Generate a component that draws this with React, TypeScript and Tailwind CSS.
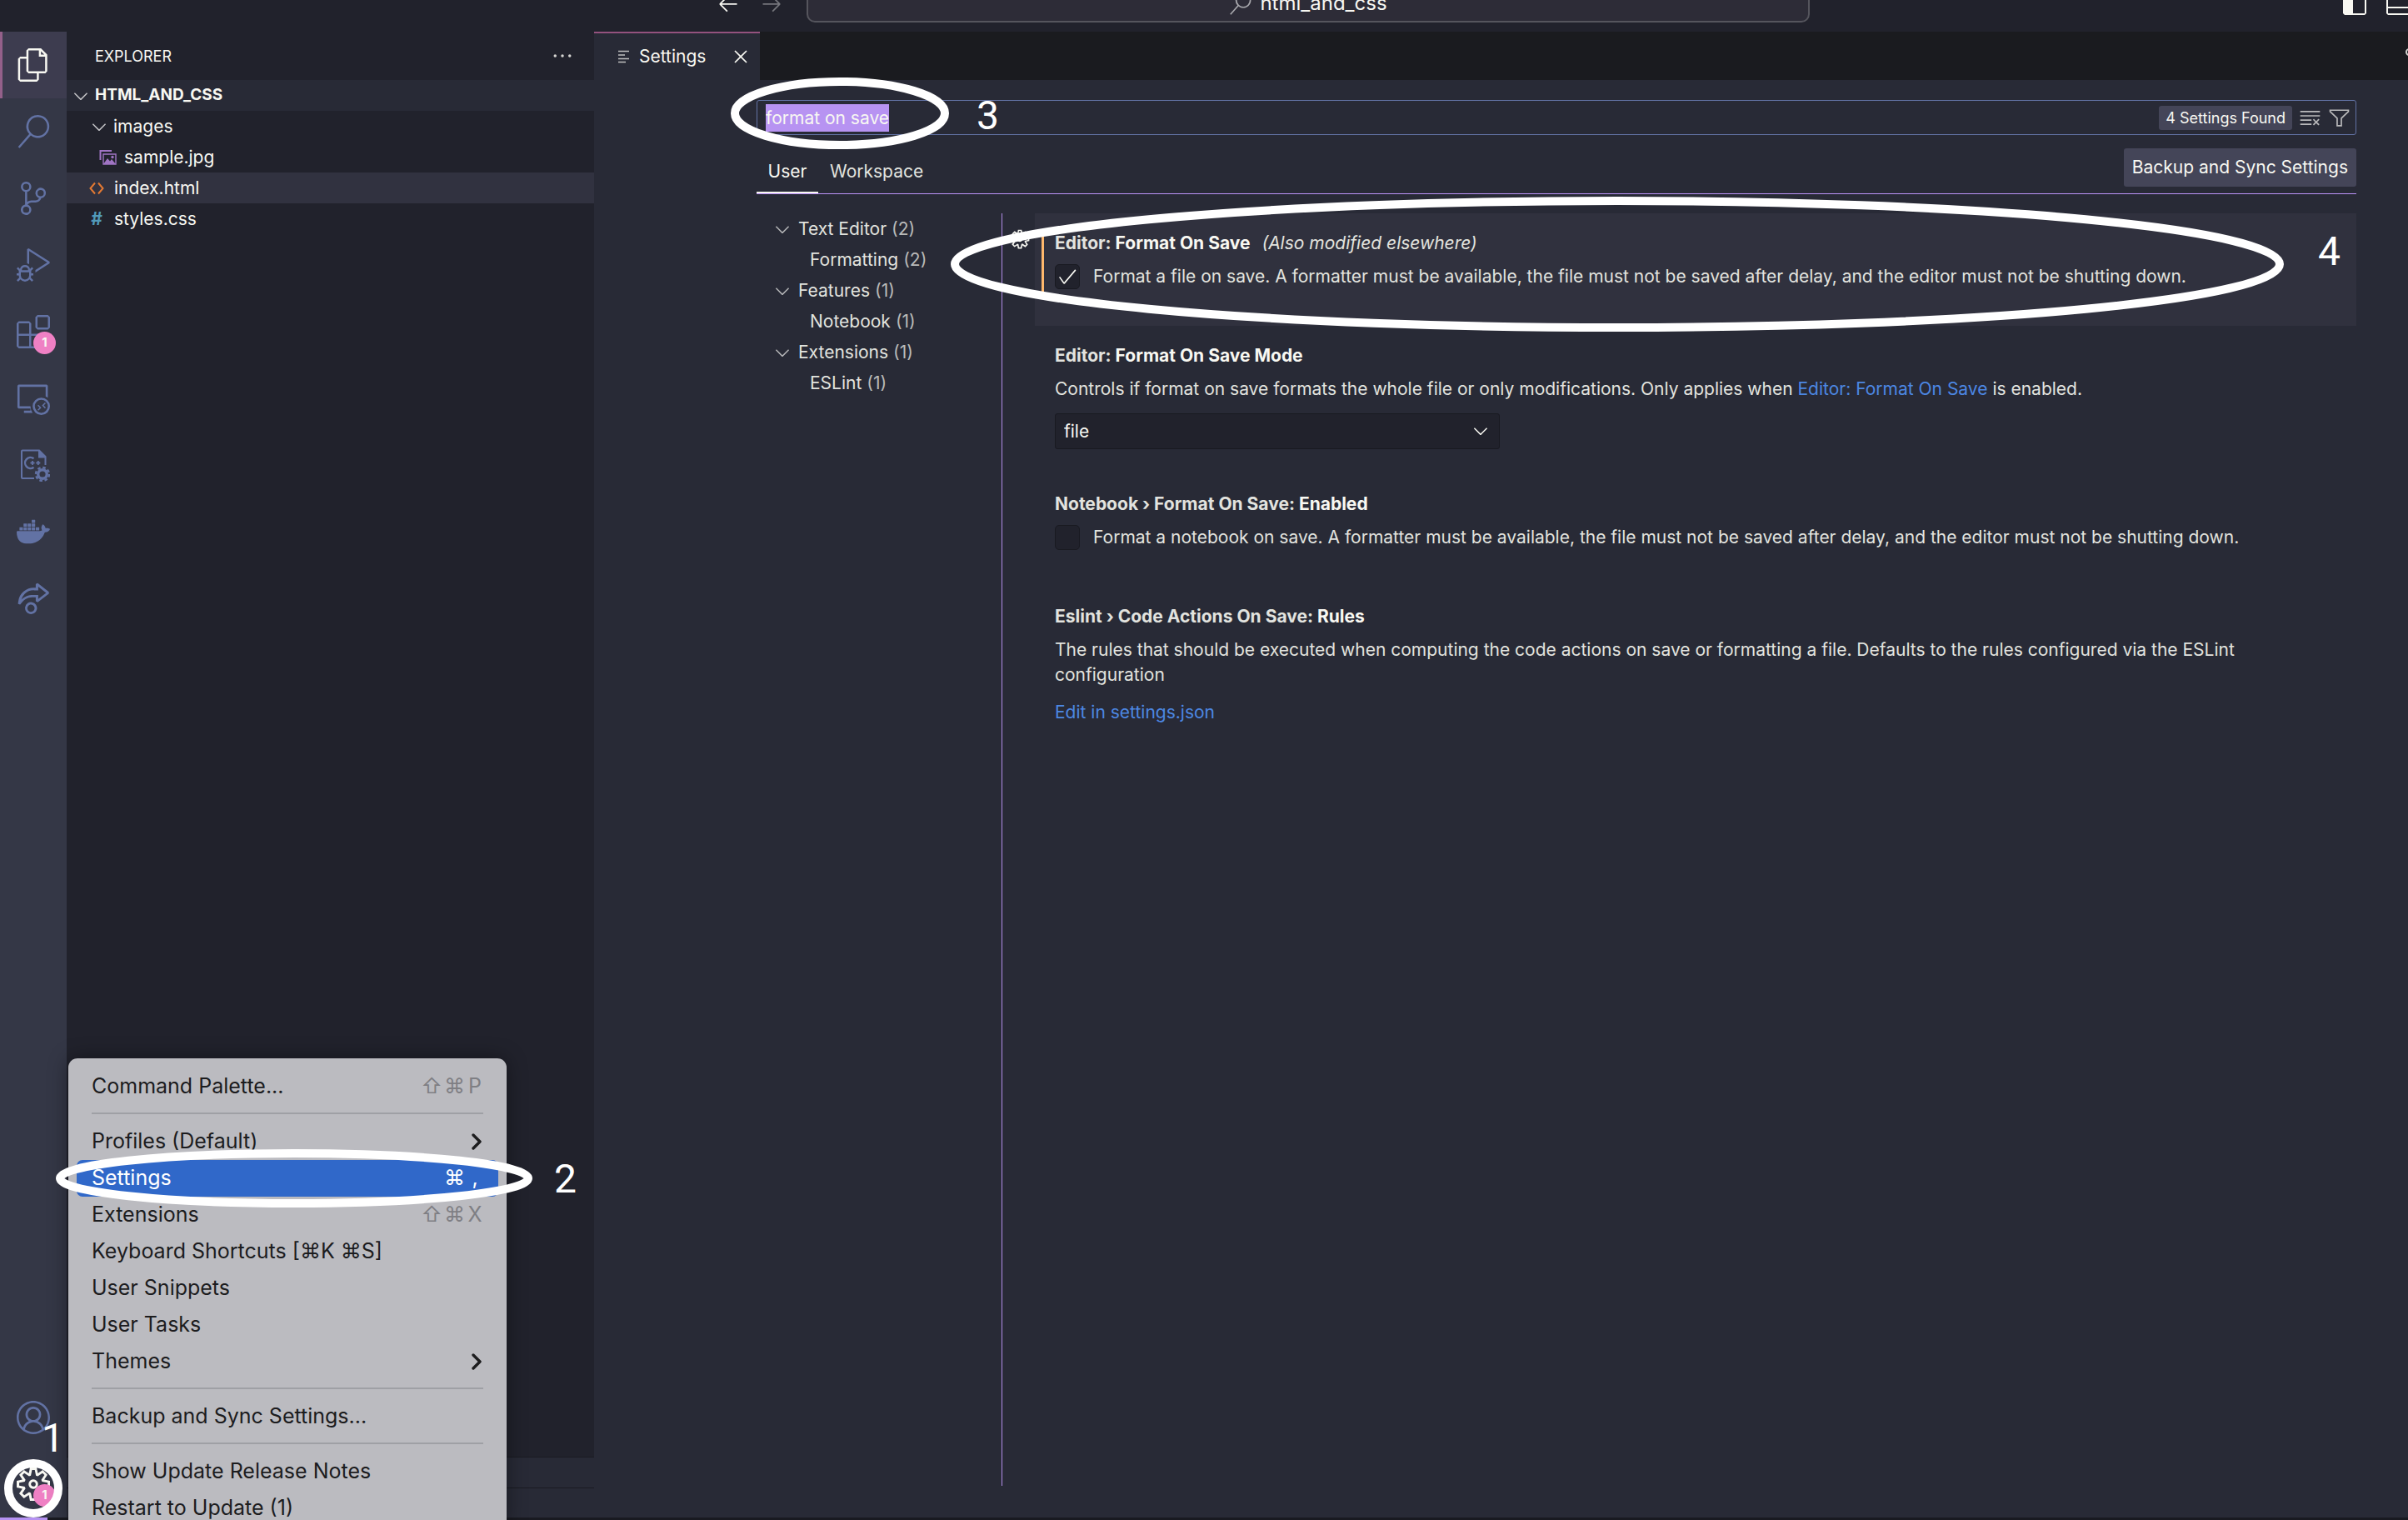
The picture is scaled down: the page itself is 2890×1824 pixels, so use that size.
import {ReactNode} from 'react';
import clsx from 'clsx';
import {
  VscAccount,
  VscArrowLeft,
  VscArrowRight,
  VscCheck,
  VscChevronDown,
  VscClearAll,
  VscClose,
  VscDebugAlt,
  VscEllipsis,
  VscExtensions,
  VscFiles,
  VscFilter,
  VscGear,
  VscLayoutPanelOff,
  VscLayoutSidebarLeft,
  VscLiveShare,
  VscRemoteExplorer,
  VscSearch,
  VscSettingsGear,
  VscSourceControl,
} from 'react-icons/vsc';
import {SiDocker} from 'react-icons/si';

function CppFileIcon() {
  return (
    <svg width="40" height="40" viewBox="0 0 40 40" fill="none">
      <path
        d="M21 36H7a1 1 0 0 1-1-1V3.500a1 1 0 0 1 1-1h20l7.500 7.500v10"
        stroke="currentColor"
        strokeWidth="2"
      />
      <path d="M26 2l9.500 9.500H26z" fill="currentColor" />
      <path d="M20.500 12.300a6.500 6.500 0 1 0 0 10.400" stroke="currentColor" strokeWidth="2.400" />
      <path
        d="M16.500 17.500h5M19 15v5M23.300 17.500h5M25.800 15v5"
        stroke="currentColor"
        strokeWidth="1.800"
      />
      <circle cx="31" cy="31" r="5.300" stroke="currentColor" strokeWidth="3.400" />
      <circle cx="31" cy="31" r="8" stroke="currentColor" strokeWidth="2.400" strokeDasharray="3.600 2.680" />
    </svg>
  );
}

function ImageFileIcon() {
  return (
    <svg width="22" height="20" viewBox="0 0 22 20" fill="none">
      <path d="M1.500 13V2H15" stroke="#a074c4" strokeWidth="2" />
      <path d="M5 6h15v12H5z" stroke="#a074c4" strokeWidth="1.400" />
      <path d="M5 18l5-7 3 3.500 2-2.500 5 6z" fill="#a074c4" />
      <circle cx="16" cy="9.500" r="1.700" fill="#a074c4" />
    </svg>
  );
}

function HtmlFileIcon() {
  return (
    <svg width="18" height="16" viewBox="0 0 18 16" fill="none">
      <path d="M7 1.500L1.500 8 7 14.500M11 1.500L16.500 8 11 14.500" stroke="#e37933" strokeWidth="2" />
    </svg>
  );
}

function SettingsTabIcon() {
  return (
    <svg width="16" height="16" viewBox="0 0 16 16" fill="none">
      <path d="M1 1.500h13M1 6h8M1 10.500h13M1 14.500h9" stroke="#bfc0c0" strokeWidth="1.600" />
    </svg>
  );
}

const activities = [
  {label: 'Explorer', icon: <VscFiles size={40} />},
  {label: 'Search', icon: <VscSearch size={40} />},
  {label: 'Source Control', icon: <VscSourceControl size={40} />},
  {label: 'Run and Debug', icon: <VscDebugAlt size={40} />},
  {label: 'Extensions', icon: <VscExtensions size={40} />, badge: 1},
  {label: 'Remote Explorer', icon: <VscRemoteExplorer size={40} />},
  {label: 'C++', icon: <CppFileIcon />},
  {label: 'Docker', icon: <SiDocker size={40} />},
  {label: 'Live Share', icon: <VscLiveShare size={40} />},
];

function ActivityButton({
  label,
  icon,
  badge,
  active,
  className = 'text-[#6272a4]',
}: {
  label: string;
  icon: ReactNode;
  badge?: number;
  active?: boolean;
  className?: string;
}) {
  return (
    <button
      type="button"
      aria-label={label}
      className={clsx(
        'relative flex h-20 w-20 items-center justify-center',
        active
          ? 'bg-[#3d3c4f] text-[#f8f8f2] shadow-[inset_3px_0_0_#94608a]'
          : className,
      )}
    >
      {icon}
      {badge && (
        <span className="absolute top-10 left-10 flex size-[27px] items-center justify-center rounded-full bg-[#ef80c4] text-[15px] font-bold text-[#f8f8f2]">
          {badge}
        </span>
      )}
    </button>
  );
}

function TitleBar() {
  return (
    <header className="h-[38px] shrink-0 overflow-hidden">
      <div className="-mt-[30px] flex h-[68px] items-center pl-[860px]">
        <button type="button" aria-label="Go back" className="text-[#f8f8f2]">
          <VscArrowLeft size={28} />
        </button>
        <button type="button" aria-label="Go forward" className="ml-6 text-[#75767c]">
          <VscArrowRight size={28} />
        </button>
        <button
          type="button"
          className="ml-7 flex h-[46px] flex-1 items-center justify-center gap-[10px] rounded-[10px] border-2 border-[#55555d] bg-[#2d2c37] text-[24px] text-[#f8f8f2]"
        >
          <VscSearch size={27} className="text-[#a9a9ad]" />
          <span>html_and_css</span>
        </button>
        <div className="flex w-[718px] shrink-0 justify-end gap-5 text-[#f8f8f2]">
          <VscLayoutSidebarLeft size={32} />
          <VscLayoutPanelOff size={32} className="-mr-1" />
        </div>
      </div>
    </header>
  );
}

function TreeRow({
  className,
  children,
}: {
  className: string;
  children: ReactNode;
}) {
  return (
    <li className={clsx('flex h-[37px] items-center', className)}>{children}</li>
  );
}

function Sidebar() {
  return (
    <aside className="flex w-[633px] shrink-0 flex-col bg-[#21222c] text-[#f8f8f2]">
      <div className="flex h-[58px] items-center justify-between pr-6 pl-[34px]">
        <h2 className="text-[18px]">EXPLORER</h2>
        <button type="button" aria-label="More actions" className="text-[#d5d5d2]">
          <VscEllipsis size={28} />
        </button>
      </div>
      <h3 className="flex h-[37px] items-center bg-[#282a36] pl-1 text-[19px] font-bold">
        <VscChevronDown size={26} className="mr-1 text-[#c5c5c8]" />
        HTML_AND_CSS
      </h3>
      <ul className="flex-1">
        <TreeRow className="pl-[26px]">
          <VscChevronDown size={26} className="mr-1 text-[#c5c5c8]" />
          images
        </TreeRow>
        <TreeRow className="gap-2 pl-[39px]">
          <ImageFileIcon />
          sample.jpg
        </TreeRow>
        <TreeRow className="gap-3 bg-[#313240] pl-[27px]">
          <HtmlFileIcon />
          index.html
        </TreeRow>
        <TreeRow className="gap-3 pl-[27px]">
          <span className="w-[18px] text-center font-bold text-[#519aba]">#</span>
          styles.css
        </TreeRow>
      </ul>
      <div className="h-[37px] border-t border-[#191a21] bg-[#282a36]" />
      <div className="h-9 border-t border-[#191a21] bg-[#282a36]" />
    </aside>
  );
}

const toc = [
  {label: 'Text Editor', count: 2},
  {label: 'Formatting', count: 2, child: true},
  {label: 'Features', count: 1},
  {label: 'Notebook', count: 1, child: true},
  {label: 'Extensions', count: 1},
  {label: 'ESLint', count: 1, child: true},
];

function TableOfContents() {
  return (
    <ul className="w-[295px] shrink-0 border-r border-[#b18ce8] pl-[18px] text-[#e2e3df]">
      {toc.map(({label, count, child}) => (
        <li
          key={label}
          className={clsx('flex h-[37px] items-center', child && 'pl-[46px]')}
        >
          {!child && <VscChevronDown size={26} className="mr-[6px] text-[#b5b6b8]" />}
          {label}
          <span className="ml-[6px] text-[#b9bab9]">({count})</span>
        </li>
      ))}
    </ul>
  );
}

function SettingTitle({
  category,
  name,
  children,
}: {
  category: string;
  name: string;
  children?: ReactNode;
}) {
  return (
    <h4 className="mb-[10px] leading-[30px] font-bold">
      {category} <span className="text-[#f8f8f2]">{name}</span>
      {children}
    </h4>
  );
}

function CheckSetting({
  id,
  checked,
  children,
}: {
  id: string;
  checked?: boolean;
  children: ReactNode;
}) {
  return (
    <div className="flex items-center gap-4">
      <span className="relative size-[30px]">
        <input
          id={id}
          type="checkbox"
          defaultChecked={checked}
          className="peer size-[30px] appearance-none rounded-[5px] border border-[#191a21] bg-[#21222c]"
        />
        <VscCheck
          size={26}
          className="pointer-events-none absolute top-[2px] left-[2px] hidden text-[#f8f8f2] peer-checked:block"
        />
      </span>
      <label htmlFor={id} className="leading-[30px]">
        {children}
      </label>
    </div>
  );
}

function SettingsList() {
  return (
    <div className="ml-[39px] flex-1 text-[#e2e3df]">
      <section className="relative h-[135px] bg-[#30313e] pt-[21px] pl-6">
        <button
          type="button"
          aria-label="More actions"
          className="absolute top-[18px] -left-[31px] text-[#f8f8f2]"
        >
          <VscGear size={26} />
        </button>
        <span className="absolute top-5 left-2 h-[78px] w-[3px] bg-[#ffb86c]" />
        <SettingTitle category="Editor:" name="Format On Save">
          <em className="ml-[14px] font-normal">(Also modified elsewhere)</em>
        </SettingTitle>
        <CheckSetting id="format-on-save" checked>
          Format a file on save. A formatter must be available, the file must not
          be saved after delay, and the editor must not be shutting down.
        </CheckSetting>
      </section>

      <section className="h-[178px] pt-[21px] pl-6">
        <SettingTitle category="Editor:" name="Format On Save Mode" />
        <label htmlFor="format-mode" className="block leading-[30px]">
          Controls if format on save formats the whole file or only
          modifications. Only applies when{' '}
          <a href="#format-on-save" className="text-[#4c87e3]">
            Editor: Format On Save
          </a>{' '}
          is enabled.
        </label>
        <div className="relative mt-[14px] w-[534px]">
          <select
            id="format-mode"
            defaultValue="file"
            className="h-[43px] w-full appearance-none rounded-[3px] border border-[#191a21] bg-[#21222c] pl-[10px] text-[#f8f8f2]"
          >
            <option value="file">file</option>
            <option value="modifications">modifications</option>
          </select>
          <VscChevronDown
            size={26}
            className="pointer-events-none absolute top-2 right-[10px] text-[#f8f8f2]"
          />
        </div>
      </section>

      <section className="h-[135px] pt-[21px] pl-6">
        <SettingTitle category="Notebook › Format On Save:" name="Enabled" />
        <CheckSetting id="notebook-format-on-save">
          Format a notebook on save. A formatter must be available, the file must
          not be saved after delay, and the editor must not be shutting down.
        </CheckSetting>
      </section>

      <section className="pt-[21px] pr-6 pl-6">
        <SettingTitle category="Eslint › Code Actions On Save:" name="Rules" />
        <p className="leading-[30px]">
          The rules that should be executed when computing the code actions on
          save or formatting a file. Defaults to the rules configured via the
          ESLint configuration
        </p>
        <a href="#settings-json" className="mt-[15px] inline-block leading-[30px] text-[#4c87e3]">
          Edit in settings.json
        </a>
      </section>
    </div>
  );
}

function Editor() {
  return (
    <main className="flex min-w-0 flex-1 flex-col bg-[#282a36]">
      <div className="flex h-[58px] justify-between bg-[#1a1b1f]">
        <div className="flex w-[199px] items-center border-t-2 border-[#94527e] bg-[#282a36] pl-7 text-[#f8f8f2]">
          <SettingsTabIcon />
          <span className="ml-[10px] flex-1">Settings</span>
          <button type="button" aria-label="Close" className="mr-[9px]">
            <VscClose size={28} />
          </button>
        </div>
        <span className="-mr-[6px] mt-5 size-[9px] rounded-full border-2 border-[#d5d5d2]" />
      </div>

      <div className="flex flex-1 flex-col pt-6 pr-[62px] pb-[38px] pl-[195px]">
        <div className="flex h-[42px] items-center rounded-[3px] border border-[#6272a4] pl-[10px]">
          <input
            aria-label="Search settings"
            defaultValue="format on save"
            className="field-sizing-content h-[33px] bg-[#b793f2] text-[#f8f8f2] outline-none"
          />
          <span className="ml-auto flex h-[29px] items-center rounded-[3px] bg-[#444558] px-2 text-[18px] text-[#f8f8f2]">
            4 Settings Found
          </span>
          <button type="button" aria-label="Clear search" className="ml-2 text-[#b9b9bb]">
            <VscClearAll size={27} />
          </button>
          <button type="button" aria-label="Filter settings" className="mr-[6px] ml-2 text-[#b9b9bb]">
            <VscFilter size={27} />
          </button>
        </div>

        <div className="flex h-[71px] items-end border-b border-[#bd93f9] text-[#e2e3df]">
          <button
            type="button"
            className="h-[54px] w-[74px] border-b-2 border-[#f8f8f2] pt-1 text-[#f8f8f2]"
          >
            User
          </button>
          <button type="button" className="ml-[14px] h-[54px] border-b-2 border-transparent pt-1">
            Workspace
          </button>
          <button
            type="button"
            className="mb-2 ml-auto h-[46px] rounded-[3px] bg-[#444558] px-[10px] text-[#f8f8f2]"
          >
            Backup and Sync Settings
          </button>
        </div>

        <div className="mt-[23px] flex flex-1">
          <TableOfContents />
          <SettingsList />
        </div>
      </div>
    </main>
  );
}

const menuGroups = [
  [{label: 'Command Palette...', keys: ['⇧', '⌘', 'P']}],
  [
    {label: 'Profiles (Default)', submenu: true},
    {label: 'Settings', keys: ['⌘', ','], active: true},
    {label: 'Extensions', keys: ['⇧', '⌘', 'X']},
    {label: 'Keyboard Shortcuts [⌘K ⌘S]'},
    {label: 'User Snippets'},
    {label: 'User Tasks'},
    {label: 'Themes', submenu: true},
  ],
  [{label: 'Backup and Sync Settings...'}],
  [{label: 'Show Update Release Notes'}, {label: 'Restart to Update (1)'}],
] as {label: string; keys?: string[]; submenu?: boolean; active?: boolean}[][];

function ManageMenu() {
  return (
    <div
      role="menu"
      className="absolute top-[1270px] left-[82px] w-[526px] rounded-t-[11px] bg-[#bbbbc0] px-[10px] pt-3 text-[25px] text-[#1c1c1e] shadow-[0_0_24px_rgba(0,0,0,0.4)]"
    >
      {menuGroups.map((group, i) => (
        <div key={group[0].label}>
          {i > 0 && <hr className="mx-[18px] mt-[9px] mb-[11px] border-t-2 border-[#9fa0a5]" />}
          {group.map(({label, keys, submenu, active}) => (
            <button
              key={label}
              type="button"
              role="menuitem"
              className={clsx(
                'flex h-11 w-full items-center justify-between rounded-[7px] px-[18px] whitespace-nowrap',
                active && 'bg-[#3068c9] text-white',
              )}
            >
              {label}
              {keys && (
                <span className={clsx('flex gap-[2px]', !active && 'text-[#7f7f84]')}>
                  {keys.map((key) => (
                    <kbd key={key} className="min-w-5 text-center font-[Inter,'DejaVu_Sans',sans-serif]">
                      {key}
                    </kbd>
                  ))}
                </span>
              )}
              {submenu && (
                <svg width="14" height="20" viewBox="0 0 14 20" fill="none">
                  <path
                    d="M2 2L10 10 2 18"
                    stroke="currentColor"
                    strokeWidth="3.400"
                    strokeLinecap="round"
                    strokeLinejoin="round"
                  />
                </svg>
              )}
            </button>
          ))}
        </div>
      ))}
    </div>
  );
}

// Ring around a control with its step number next to it
function Step({
  number,
  rx,
  ry,
  ringClass,
  numberClass,
}: {
  number: number;
  rx: number;
  ry: number;
  ringClass: string;
  numberClass: string;
}) {
  const width = rx * 2 + 10;
  const height = ry * 2 + 10;

  return (
    <div className="pointer-events-none">
      <svg
        width={width}
        height={height}
        viewBox={`0 0 ${width} ${height}`}
        className={clsx('absolute', ringClass)}
        fill="none"
      >
        <ellipse cx={width / 2} cy={height / 2} rx={rx} ry={ry} stroke="white" strokeWidth="10" />
      </svg>
      <span
        className={clsx(
          'absolute font-[Roboto,sans-serif] text-[48px] leading-none text-white',
          numberClass,
        )}
      >
        {number}
      </span>
    </div>
  );
}

export default function App() {
  return (
    <div className="relative flex h-screen flex-col overflow-hidden bg-[#21222c] font-[Inter,'DejaVu_Sans',sans-serif] text-[21px]">
      <TitleBar />
      <div className="flex min-h-0 flex-1">
        <nav className="flex w-20 shrink-0 flex-col bg-[#343746]">
          {activities.map((activity, i) => (
            <ActivityButton key={activity.label} {...activity} active={i === 0} />
          ))}
          <div className="mt-auto">
            <ActivityButton label="Accounts" icon={<VscAccount size={40} />} />
            <ActivityButton
              label="Manage"
              icon={<VscSettingsGear size={40} />}
              badge={1}
              className="text-[#f8f8f2]"
            />
          </div>
        </nav>
        <Sidebar />
        <Editor />
      </div>
      <footer className="h-[3px] shrink-0 bg-[#191a21]">
        <div className="h-full w-[57px] bg-[#b592f2]" />
      </footer>

      <ManageMenu />

      <Step number={1} rx={30} ry={30} ringClass="top-[1751px] left-[5px]" numberClass="top-[1702px] left-[50px]" />
      <Step number={2} rx={281} ry={30} ringClass="top-[1379px] left-[67px]" numberClass="top-[1391px] left-[665px]" />
      <Step number={3} rx={126} ry={38} ringClass="top-[93px] left-[877px]" numberClass="top-[115px] left-[1172px]" />
      <Step number={4} rx={795} ry={76} ringClass="top-[236px] left-[1141px]" numberClass="top-[278px] left-[2782px]" />
    </div>
  );
}
